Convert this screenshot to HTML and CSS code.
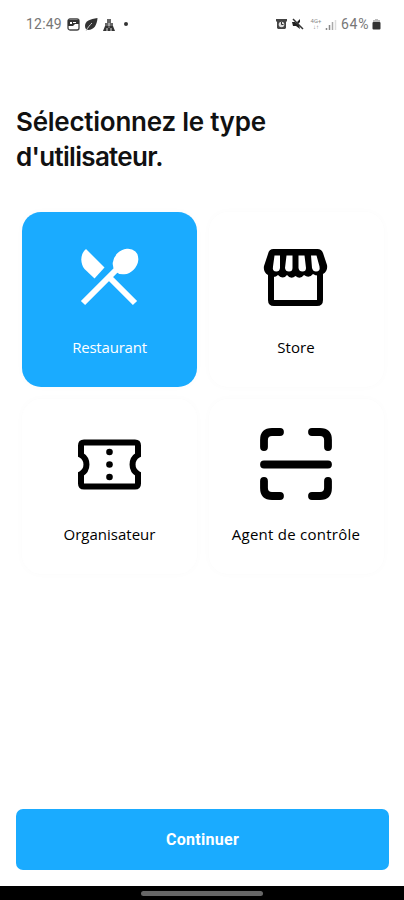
FILE: index.html
```html
<!DOCTYPE html>
<html lang="fr">
<head>
    <meta charset="UTF-8">
    <meta name="viewport" content="width=device-width, initial-scale=1.0">
    <title>Type d'utilisateur</title>
    <link rel="stylesheet" href="styles.css">
</head>
<body>
    <header class="status-bar">
        <div class="status-left">
            <span class="time">12:49</span>
            <svg width="13" height="13" viewBox="0 0 13 13">
                <rect x="1" y="1" width="11" height="11" rx="2" fill="none" stroke="#444" stroke-width="1.3"/>
                <path d="M1 2h11v4H8L6 8H1z" fill="#333"/>
                <path d="M3 4h2v2H3zM6 4h3v1H6z" fill="#fff"/>
            </svg>
            <svg width="14" height="13" viewBox="0 0 14 13">
                <path d="M13.500 0C6 1 1 3 1 8c0 2 1 4 3 4 6 0 9-5 9.500-12z" fill="#333"/>
                <path d="M2 13C4 9 6 7 8 5" fill="none" stroke="#ccc"/>
            </svg>
            <svg width="14" height="13" viewBox="0 0 14 13">
                <path d="M5 1h4v4H5zM3 5h8v4H3z" fill="#666"/>
                <path d="M1 13l2-5h3l1 2 1-2h3l2 5z" fill="#333"/>
                <path d="M7 5v3M5 10v3M9 10v3" stroke="#ddd"/>
            </svg>
            <span class="dot"></span>
        </div>
        <div class="status-right">
            <svg class="alarm" width="11" height="12" viewBox="0 0 11 12">
                <path d="M0 1h11v2l-1 1v6l-1 1H2l-1-1V4L0 3z" fill="#444"/>
                <circle cx="5.500" cy="6.500" r="2.800" fill="#ddd"/>
                <path d="M5.500 4v2.500h2" fill="none" stroke="#333"/>
            </svg>
            <svg class="mute" width="12" height="12" viewBox="0 0 12 12">
                <path d="M0 4h3l4 3 1 4-4-3H1zM5 4l3-3v3L6 6z" fill="#222"/>
                <path d="M1 1l10 10" stroke="#333" stroke-width="1.500"/>
            </svg>
            <span class="network"><span>4G+</span><span>↓↑</span></span>
            <svg class="signal" width="12" height="11" viewBox="0 0 12 11">
                <path d="M1.500 11V9M4.500 11V6" stroke="#888" stroke-width="1.500"/>
                <path d="M7.500 11V3" stroke="#aaa" stroke-width="1.500"/>
                <path d="M10.500 11V1" stroke="#ddd" stroke-width="1.500"/>
            </svg>
            <span class="battery">64%</span>
            <svg width="9" height="12" viewBox="0 0 9 12">
                <path d="M1 4V2h2V1h3v1h2v2z" fill="#bbb"/>
                <rect x="0.500" y="4" width="8" height="7.500" rx="1" fill="#333"/>
            </svg>
        </div>
    </header>

    <main>
        <h1>Sélectionnez le type<br><span class="second-line">d'utilisateur.</span></h1>

        <div class="types">
            <button type="button" class="card selected">
                <svg viewBox="0 0 75 75">
                    <path d="M14 9L32.500 27.500 22.500 38.500 12.500 29C8 23 8 14 14 9z" fill="currentColor"/>
                    <ellipse cx="53.500" cy="21.500" rx="14" ry="11.500" transform="rotate(-45 53.500 21.500)" fill="currentColor"/>
                    <path d="M45 29L11 63M37 37l26 26" fill="none" stroke="currentColor" stroke-width="6"/>
                </svg>
                <span class="label restaurant">Restaurant</span>
            </button>
            <button type="button" class="card">
                <svg viewBox="0 0 75 75">
                    <path d="M12 32v28q0 3 3 3h43q3 0 3-3V32" fill="none" stroke="currentColor" stroke-width="6"/>
                    <path d="M14.500 9h44q4 0 5.500 4l4 12q1 6-4 9-5 3-10 0-4 5-9 1-4 5-8.500 1-4.500 4-8.500-1-4 5-9 0-4 4-10 0-5-3-4-9l4-12q1-5 5.500-5z" fill="currentColor"/>
                    <path d="M15.500 15.500h5.500V28q-.5 3.500-3.500 3.500-4.500 0-3.500-5zM27.500 15.500h6V28q0 3.500-3.500 3.500t-4-3.500zM39.500 15.500h6l1.500 12.500q0 3.500-3.500 3.500t-4-3.500zM52 15.500h5.500l3 11q1 5-3.500 5-3 0-4-3.500z" fill="#fff"/>
                </svg>
                <span class="label store">Store</span>
            </button>
            <button type="button" class="card">
                <svg viewBox="0 0 75 75">
                    <path d="M12 15.500h51q3 0 3 3v9.500a11 11 0 0 0 0 19v9.500q0 3-3 3H12q-3 0-3-3V47a11 11 0 0 0 0-19v-9.500q0-3 3-3z" fill="none" stroke="currentColor" stroke-width="6"/>
                    <circle cx="37.500" cy="25" r="3.300"/>
                    <circle cx="37.500" cy="37.500" r="3.300"/>
                    <circle cx="37.500" cy="50" r="3.300"/>
                </svg>
                <span class="label organisateur">Organisateur</span>
            </button>
            <button type="button" class="card">
                <svg viewBox="0 0 75 75">
                    <path d="M5 20v-7q0-8 8-8h8M53 5h8q8 0 8 8v7M69 54v7q0 8-8 8h-8M21 69h-8q-8 0-8-8v-7M5 37.500h64" fill="none" stroke="currentColor" stroke-width="7.800" stroke-linecap="round"/>
                </svg>
                <span class="label agent">Agent de contrôle</span>
            </button>
        </div>

        <button type="button" class="continue">Continuer</button>
    </main>

    <footer class="nav-bar">
        <span class="handle"></span>
    </footer>
</body>
</html>
```
FILE: styles.css
```css
* {
    box-sizing: border-box;
}
body {
    margin: 0;
    height: 900px;
    display: flex;
    flex-direction: column;
    background: #fff;
    color: #111;
    font-family: Inter, sans-serif;
    overflow: hidden;
}
button {
    border: none;
    padding: 0;
    cursor: pointer;
}
.status-bar {
    height: 48px;
    padding: 0 23px 0 26px;
    display: flex;
    justify-content: space-between;
    align-items: center;
    color: #777;
    font-family: Roboto, sans-serif;
    font-size: 14px;
}
.status-left,
.status-right {
    display: flex;
    align-items: center;
}
.status-left {
    gap: 4px;
}
.time {
    width: 37px;
    letter-spacing: 0.2px;
}
.dot {
    width: 4px;
    height: 4px;
    margin-left: 4px;
    border-radius: 50%;
    background: #333;
}
.mute {
    margin-left: 5px;
}
.network {
    display: flex;
    flex-direction: column;
    align-items: center;
    width: 12px;
    margin-left: 6px;
    font-size: 6px;
    line-height: 6px;
    color: #888;
}
.signal {
    margin: 0 4px 0 3px;
}
.battery {
    width: 31px;
    letter-spacing: 0.7px;
}
main {
    flex: 1;
    display: flex;
    flex-direction: column;
    padding: 56px 15px 16px 16px;
}
h1 {
    margin: 0;
    font-size: 26px;
    line-height: 35px;
    font-weight: 600;
    letter-spacing: -0.25px;
}
.second-line {
    letter-spacing: -0.7px;
}
.types {
    display: grid;
    grid-template-columns: 175px 175px;
    grid-auto-rows: 175px;
    gap: 11.5px;
    margin: 38px 0 0 6px;
}
.card {
    display: flex;
    flex-direction: column;
    align-items: center;
    padding-top: 28px;
    border-radius: 19px;
    background: #fff;
    color: #000;
    box-shadow: 0 0 8px rgba(0, 0, 0, 0.02);
}
.card svg {
    width: 75px;
    height: 75px;
}
.card.selected {
    background: #1aabff;
    color: #fff;
}
.label {
    margin-top: 22px;
    font-family: "Open Sans", sans-serif;
    font-size: 15px;
    line-height: 20px;
    white-space: nowrap;
}
.restaurant {
    letter-spacing: -0.2px;
}
.store {
    letter-spacing: 0.1px;
}
.agent {
    letter-spacing: 0.25px;
}
.continue {
    height: 61px;
    margin-top: auto;
    border-radius: 7px;
    background: #1aabff;
    color: #fff;
    font-family: Roboto, sans-serif;
    font-size: 16px;
    font-weight: 700;
    letter-spacing: 0.3px;
}
.nav-bar {
    height: 14px;
    display: flex;
    justify-content: center;
    background: #000;
}
.handle {
    width: 122px;
    height: 5px;
    margin-top: 5px;
    border-radius: 3px;
    background: #666;
}
```
